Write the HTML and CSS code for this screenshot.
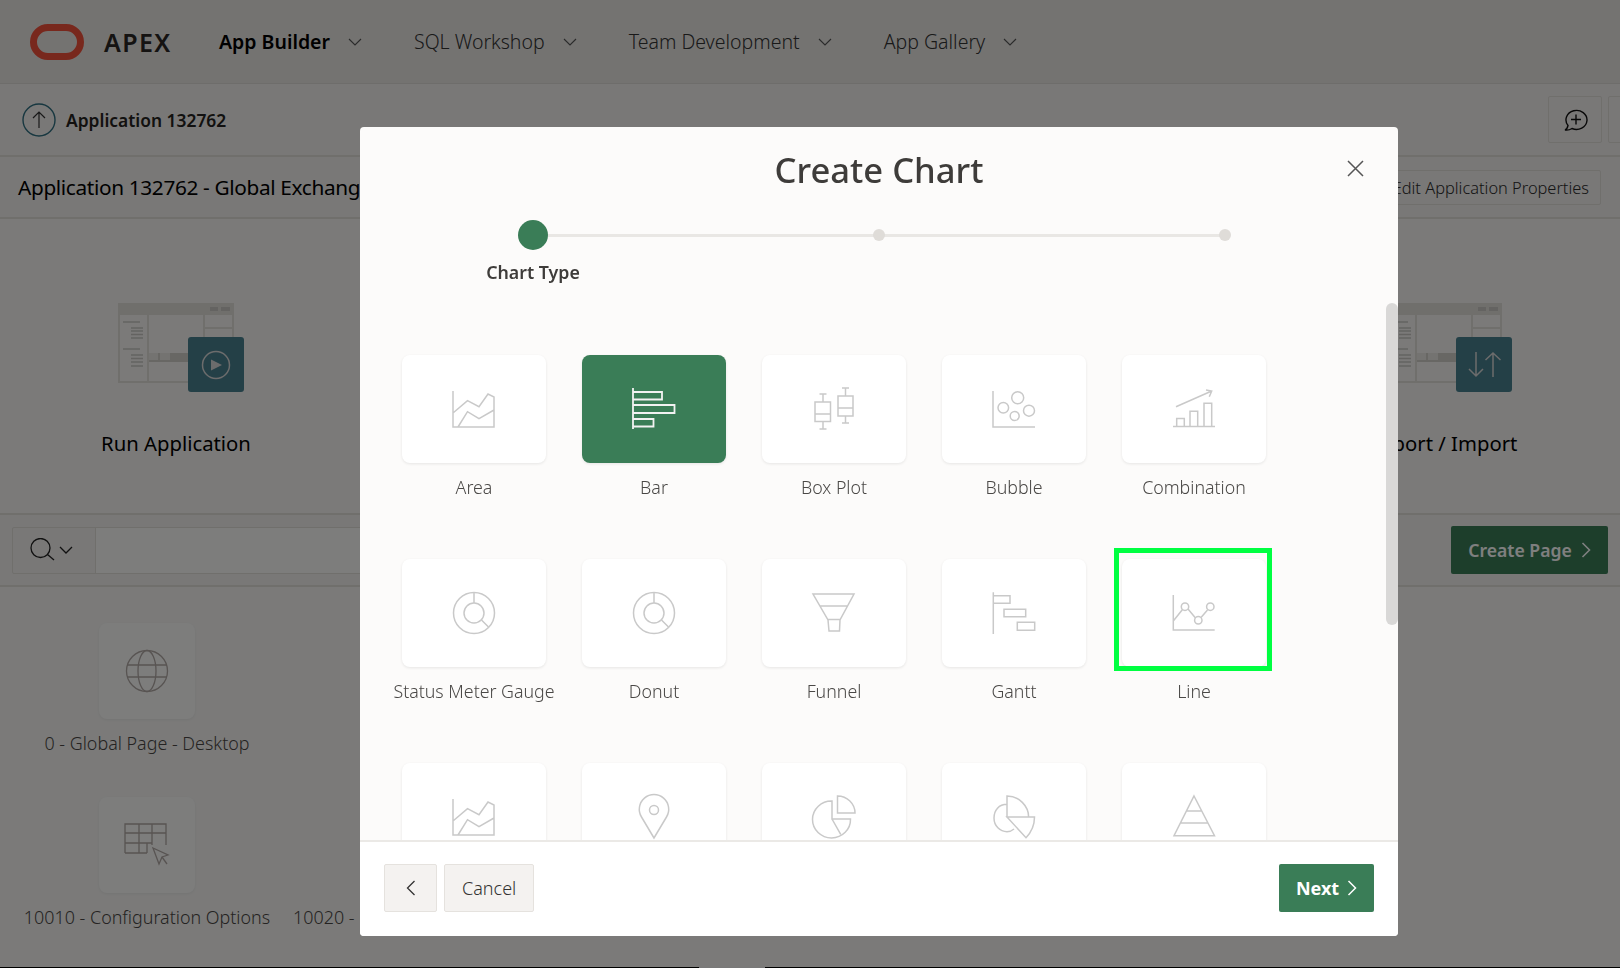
FILE: index.html
```html
<!DOCTYPE html>
<html lang="en">
<head>
<meta charset="UTF-8">
<title>Create Chart</title>
<link rel="stylesheet" href="styles.css">
</head>
<body>
<div class="page">
  <header class="topnav">
    <svg class="logo" width="54" height="36" viewBox="0 0 54 36"><rect x="3.5" y="3.5" width="47" height="29" rx="14.5" fill="none" stroke="#f0503a" stroke-width="7"/></svg>
    <span class="brand">APEX</span>
    <a class="nav-item nav-active">App Builder<svg class="chev" width="14" height="8" viewBox="0 0 14 8"><path d="M1 1l6 6 6-6"/></svg></a>
    <a class="nav-item">SQL Workshop<svg class="chev" width="14" height="8" viewBox="0 0 14 8"><path d="M1 1l6 6 6-6"/></svg></a>
    <a class="nav-item">Team Development<svg class="chev" width="14" height="8" viewBox="0 0 14 8"><path d="M1 1l6 6 6-6"/></svg></a>
    <a class="nav-item">App Gallery<svg class="chev" width="14" height="8" viewBox="0 0 14 8"><path d="M1 1l6 6 6-6"/></svg></a>
  </header>

  <div class="crumbs">
    <svg class="up-icon" width="34" height="34" viewBox="0 0 34 34"><circle cx="17" cy="17" r="16" fill="none" stroke="#2f6f80" stroke-width="1.4"/><path d="M17 25V9M11 15l6-6 6 6" fill="none" stroke="#333" stroke-width="1.2"/></svg>
    <b class="crumb-name">Application 132762</b>
    <span class="tool-btn"><svg width="26" height="26" viewBox="0 0 26 26"><path d="M3 23c1.500-.5 2.500-2 3-4.500A10.500 9.500 0 1 1 10 21.500C8 22.800 5 23.300 3 23zM14 7.500v10M9 12.500h10" fill="none" stroke="#111" stroke-width="1.400"/></svg></span>
    <span class="tool-btn tool-btn-cut"></span>
  </div>

  <div class="title-row">
    <h1>Application 132762 - Global Exchange Rates</h1>
    <span class="edit-btn">Edit Application Properties</span>
  </div>

  <section class="hero">
    <div class="hero-item">
      <div class="thumb">
        <svg width="116" height="80" viewBox="0 0 116 80"><use href="#thumbnail"/></svg>
        <span class="thumb-tile"><svg width="32" height="32" viewBox="0 0 32 32"><circle cx="16" cy="16" r="13.500" fill="none" stroke="#d8d8d8" stroke-width="1.5"/><path d="M11 10.500l11 5.500-11 5.500z" fill="#d8d8d8"/></svg></span>
      </div>
      <span class="hero-label">Run Application</span>
    </div>
    <div class="hero-item">
      <div class="thumb">
        <svg width="116" height="80" viewBox="0 0 116 80"><use href="#thumbnail"/></svg>
        <span class="thumb-tile"><svg width="34" height="30" viewBox="0 0 34 30"><path d="M9 2v24M2 19l7 7 7-7M26 27V3M18.500 10L26 3l7.500 7" fill="none" stroke="#d8d8d8" stroke-width="1.5"/></svg></span>
      </div>
      <span class="hero-label">Export / Import</span>
    </div>
  </section>

  <div class="search-row">
    <div class="search-group">
      <span class="search-btn">
        <svg width="26" height="24" viewBox="0 0 26 24"><circle cx="10.500" cy="10" r="9.500" fill="none" stroke="#222" stroke-width="1.300"/><path d="M17.500 16.500l6.500 5.500" stroke="#222" stroke-width="1.300"/></svg>
        <svg class="chev-dark" width="14" height="8" viewBox="0 0 14 8"><path d="M1 1l6 6 6-6"/></svg>
      </span>
      <span class="search-input"></span>
    </div>
    <a class="create-btn">Create Page<svg width="10" height="16" viewBox="0 0 10 16"><path d="M1.500 1l7 7-7 7" fill="none" stroke="#fff" stroke-width="1.6"/></svg></a>
  </div>

  <div class="pages">
    <div class="page-tile">
      <span class="page-icon"><svg width="44" height="44" viewBox="0 0 44 44"><g fill="none" stroke="#b0a8a4" stroke-width="1.300"><ellipse cx="22" cy="22" rx="20.500" ry="20.500"/><ellipse cx="22" cy="22" rx="9" ry="20.500"/><path d="M2 16h40M2 28h40"/></g></svg></span>
      <span class="page-label">0 - Global Page - Desktop</span>
    </div>
    <div class="page-tile"></div>
    <div class="page-tile">
      <span class="page-icon"><svg width="46" height="46" viewBox="0 0 46 46"><g fill="none" stroke="#b0a8a4" stroke-width="1.300"><path d="M1 31V2h41v21M1 11h41M1 21h27M1 31h22M15 2v29M28 2v21M23 21v10"/><path d="M29 26l15 7-6 2-3 7z"/><path d="M38 35l5 7"/></g></svg></span>
      <span class="page-label">10010 - Configuration Options</span>
    </div>
    <div class="page-tile">
      <span class="page-icon"></span>
      <span class="page-label">10020 - Exchange Rate History</span>
    </div>
  </div>

  <div class="page-edge"><span></span></div>
</div>

<div class="overlay"></div>

<div class="dialog">
  <h2 class="dialog-title">Create Chart</h2>
  <svg class="dialog-close" width="17" height="17" viewBox="0 0 17 17"><path d="M1 1l15 15M16 1L1 16" stroke="#555" stroke-width="1.500"/></svg>

  <ol class="steps">
    <li class="step step-current"><span class="step-dot"></span><span class="step-label">Chart Type</span></li>
    <li class="step"><span class="step-dot"></span></li>
    <li class="step"><span class="step-dot"></span></li>
  </ol>

  <div class="dialog-body">
    <span class="scrollbar"></span>
    <div class="chart-grid">
      <div class="chart-item">
        <span class="chart-card"><svg class="ico" width="48" height="48" viewBox="0 0 48 48"><use href="#i-area"/></svg></span>
        <span class="chart-label">Area</span>
      </div>
      <div class="chart-item">
        <span class="chart-card card-selected"><svg class="ico" width="48" height="48" viewBox="0 0 48 48"><path d="M3 3v41M3 7h29v7.500H3M3 20h41.500v8H3M3 34h20.500v7.500H3"/></svg></span>
        <span class="chart-label">Bar</span>
      </div>
      <div class="chart-item">
        <span class="chart-card"><svg class="ico" width="48" height="48" viewBox="0 0 48 48"><path d="M5 17h15.500v19.500H5zM5 29h15.500M13 17V9M9.500 9h7M13 36.500V44M9.500 44h7M28 11h15v20H28zM28 23h15M35.500 11V3M32 3h7M35.500 31v7M32 38h7"/></svg></span>
        <span class="chart-label">Box Plot</span>
      </div>
      <div class="chart-item">
        <span class="chart-card"><svg class="ico" width="48" height="48" viewBox="0 0 48 48"><path d="M3 6v36h42"/><circle cx="13.300" cy="22.700" r="5.300"/><circle cx="27.700" cy="12.700" r="6"/><circle cx="24.700" cy="31" r="4.500"/><circle cx="39" cy="25.700" r="5.500"/></svg></span>
        <span class="chart-label">Bubble</span>
      </div>
      <div class="chart-item">
        <span class="chart-card"><svg class="ico" width="48" height="48" viewBox="0 0 48 48"><path d="M3 41.500h42M6.700 41.500v-8h7.600v8M20 41.500V26.300h7.700v15.200M34 41.500V18.300h7.700v23.200M6 21.700L41.700 6M36 5l5.700 1-2.400 5.700"/></svg></span>
        <span class="chart-label">Combination</span>
      </div>
      <div class="chart-item">
        <span class="chart-card"><svg class="ico" width="48" height="48" viewBox="0 0 48 48"><use href="#i-donut"/></svg></span>
        <span class="chart-label">Status Meter Gauge</span>
      </div>
      <div class="chart-item">
        <span class="chart-card"><svg class="ico" width="48" height="48" viewBox="0 0 48 48"><use href="#i-donut"/></svg></span>
        <span class="chart-label">Donut</span>
      </div>
      <div class="chart-item">
        <span class="chart-card"><svg class="ico" width="48" height="48" viewBox="0 0 48 48"><path d="M3 5h41L30 31l-.5 11H19l-1-11zM10 17h27.500M18 30.500h12"/></svg></span>
        <span class="chart-label">Funnel</span>
      </div>
      <div class="chart-item">
        <span class="chart-card"><svg class="ico" width="48" height="48" viewBox="0 0 48 48"><path d="M3.300 3.300V45M3.300 6.700H20v7.600H3.300M14 20.300h21.700v7.400H14zM27.300 33.300h17.400v8H27.300z"/></svg></span>
        <span class="chart-label">Gantt</span>
      </div>
      <div class="chart-item">
        <span class="chart-card card-marked"><svg class="ico" width="48" height="48" viewBox="0 0 48 48"><path d="M3.300 6v35h41.400M3.300 32l9.200-11.500M18 20l7.500 9M31 28.500l6.500-7.500"/><circle cx="15" cy="17.700" r="3.700"/><circle cx="28.300" cy="31.300" r="3.700"/><circle cx="40.300" cy="17.700" r="3.700"/></svg></span>
        <span class="chart-label">Line</span>
      </div>
      <div class="chart-item">
        <span class="chart-card"><svg class="ico" width="48" height="48" viewBox="0 0 48 48"><use href="#i-area"/></svg></span>
      </div>
      <div class="chart-item">
        <span class="chart-card"><svg class="ico" width="48" height="48" viewBox="0 0 48 48"><path d="M24 45L11.500 24a14.700 14.700 0 1 1 25 0z"/><circle cx="24" cy="17" r="4.500"/></svg></span>
      </div>
      <div class="chart-item">
        <span class="chart-card"><svg class="ico" width="48" height="48" viewBox="0 0 48 48"><path d="M27.500 3A17.500 17 0 0 1 45 20H27.500zM22 8a19 18.500 0 1 0 18.500 18H22zM22 26l8.700 15.300"/></svg></span>
      </div>
      <div class="chart-item">
        <span class="chart-card"><svg class="ico" width="48" height="48" viewBox="0 0 48 48"><path d="M17 3c12 0 21.600 10 21.600 21H17zM17 11.300C9 11.300 4 17 4 25c0 8 6 13.700 13 13.700 3 0 5-1 7-2.700M17 24h27.500c0 7-3 15-8.500 20.700z"/></svg></span>
      </div>
      <div class="chart-item">
        <span class="chart-card"><svg class="ico" width="48" height="48" viewBox="0 0 48 48"><path d="M24 3l20.500 39.700H4zM16 18h16M10.500 30h27"/></svg></span>
      </div>
    </div>
  </div>

  <footer class="dialog-foot">
    <a class="foot-btn foot-back"><svg width="10" height="16" viewBox="0 0 10 16"><path d="M8.500 1l-7 7 7 7" fill="none" stroke="#333" stroke-width="1.300"/></svg></a>
    <a class="foot-btn">Cancel</a>
    <a class="next-btn">Next<svg width="10" height="16" viewBox="0 0 10 16"><path d="M1.500 1l7 7-7 7" fill="none" stroke="#fff" stroke-width="1.500"/></svg></a>
  </footer>
</div>

<svg class="defs" width="0" height="0">
  <defs>
    <g id="i-area"><path d="M3 6v36h41V12l-6-3-9 12.700-11.500-6L3 28M8 42l9.500-15.300L29 33.700 44 25"/></g>
    <g id="i-donut"><circle cx="24" cy="24" r="20.500"/><circle cx="24" cy="24" r="10"/><path d="M24 3.500V14M31.500 31l7 7"/></g>
    <g id="thumbnail">
      <rect x="1" y="1" width="114" height="78" fill="none" stroke="#e0ded9" stroke-width="2"/>
      <rect x="0" y="0" width="116" height="12" fill="#e0ded9"/>
      <rect x="92" y="4" width="8" height="4" fill="#c8c6c2"/>
      <rect x="103" y="4" width="9" height="4" fill="#c8c6c2"/>
      <path d="M30 12v67M86 12v38M86 25h30M86 37h30" stroke="#e0ded9" stroke-width="2"/>
      <rect x="31" y="50" width="85" height="9" fill="#d0cec9"/>
      <rect x="31" y="50" width="9" height="7" fill="#e8e6e2"/>
      <rect x="42" y="50" width="10" height="7" fill="#e8e6e2"/>
      <path d="M5 19h17M13 25h12M13 28h12M13 31.500h12M13 35h12M5 46h17M13 52h12M13 55.500h12M13 59h12M13 63h12" stroke="#c8c6c2" stroke-width="1.500"/>
    </g>
  </defs>
</svg>
</body>
</html>
```

FILE: styles.css
```css
* {
  box-sizing: border-box;
}

html, body {
  margin: 0;
  padding: 0;
  height: 100%;
  overflow: hidden;
}

body {
  font-family: "Noto Sans", "Open Sans", Arial, sans-serif;
  color: #000;
  background-color: #f4f2f0;
}

.page {
  height: 968px;
  display: flex;
  flex-direction: column;
  overflow: hidden;
}

/* top bar */
.topnav {
  height: 84px;
  flex: none;
  display: flex;
  align-items: center;
  padding: 0 0 0 30px;
  background-color: #e8e6e3;
  border-bottom: 1px solid #dcdad6;
}

.brand {
  margin-left: 20px;
  width: 115px;
  font-size: 25px;
  font-weight: 600;
  letter-spacing: 1.4px;
  color: #2a2725;
}

.nav-item {
  display: flex;
  align-items: center;
  gap: 18px;
  margin-right: 52px;
  font-size: 19.500px;
  font-weight: 300;
  color: #333;
}

.nav-active {
  font-weight: 600;
  color: #000;
}

.chev path, .chev-dark path {
  fill: none;
  stroke: #555;
  stroke-width: 1.100;
}

.chev-dark path {
  stroke: #222;
  stroke-width: 1.300;
}

.crumbs {
  height: 73px;
  flex: none;
  display: flex;
  align-items: center;
  padding-left: 22px;
  background-color: #f2f0ee;
  border-bottom: 2px solid #e0ded9;
}

.crumb-name {
  margin-left: 10px;
  margin-right: auto;
  font-size: 17.400px;
  font-weight: 600;
  color: #252320;
}

.tool-btn {
  width: 54px;
  height: 47px;
  margin-right: 6px;
  display: flex;
  align-items: center;
  justify-content: center;
  border: 1px solid #e0ded9;
  border-radius: 2px;
}

.tool-btn-cut {
  margin-right: -42px;
}

.title-row {
  height: 62px;
  flex: none;
  display: flex;
  align-items: center;
  justify-content: space-between;
  padding: 0 19px 0 18px;
  background-color: #f2f0ee;
  border-bottom: 2px solid #e0ded9;
}

h1 {
  margin: 0;
  font-size: 20.800px;
  font-weight: 400;
  letter-spacing: -0.35px;
  white-space: nowrap;
}

.edit-btn {
  height: 35px;
  padding: 0 11px;
  display: flex;
  align-items: center;
  font-size: 16.400px;
  font-weight: 300;
  color: #2a2a2a;
  border: 1px solid #e0ded9;
  border-radius: 2px;
}

/* hero tiles */
.hero {
  height: 294px;
  flex: none;
  display: flex;
  justify-content: space-between;
  padding: 84px 76px 0;
  background-color: #f6f5f3;
}

.hero-item {
  width: 200px;
  display: flex;
  flex-direction: column;
  align-items: center;
}

.thumb {
  position: relative;
  width: 116px;
  height: 80px;
}

.thumb-tile {
  position: absolute;
  left: 70px;
  top: 34px;
  width: 56px;
  height: 55px;
  display: flex;
  align-items: center;
  justify-content: center;
  background-color: #48808f;
  border-radius: 3px;
}

.hero-label {
  margin-top: 45px;
  font-size: 20.300px;
  line-height: 30px;
  white-space: nowrap;
}

.search-row {
  height: 74px;
  flex: none;
  display: flex;
  align-items: center;
  padding: 0 12px;
  gap: 60px;
  background-color: #f2f0ee;
  border-top: 2px solid #e0ded9;
  border-bottom: 2px solid #e0ded9;
}

.search-group {
  flex: 1;
  height: 47px;
  display: flex;
  border: 1px solid #e0ded9;
  border-radius: 2px;
}

.search-btn {
  width: 82px;
  display: flex;
  align-items: center;
  gap: 3px;
  padding-left: 17px;
}

.search-input {
  flex: 1;
  background-color: #fbfaf9;
  border-left: 1px solid #e0ded9;
}

.create-btn {
  width: 157px;
  height: 48px;
  display: flex;
  align-items: center;
  justify-content: center;
  gap: 9px;
  font-size: 17.600px;
  font-weight: 600;
  color: #fff;
  background-color: #3a7d57;
  border-radius: 2px;
}

.pages {
  flex: 1;
  min-height: 0;
  overflow: hidden;
  display: grid;
  grid-template-columns: 270px 270px;
  grid-auto-rows: 174px;
  padding: 36px 0 0 12px;
  background-color: #f6f5f3;
}

.page-tile {
  display: flex;
  flex-direction: column;
  align-items: center;
}

.page-icon {
  width: 96px;
  height: 96px;
  flex: none;
  display: flex;
  align-items: center;
  justify-content: center;
  background-color: #fafaf9;
  border-radius: 8px;
  box-shadow: 0 1px 3px rgba(0, 0, 0, 0.06);
}

.page-label {
  margin-top: 12px;
  font-size: 17.900px;
  line-height: 24px;
  font-weight: 300;
  color: #4a4744;
  white-space: nowrap;
}

.page-edge {
  height: 1px;
  flex: none;
  background-color: #000;
}

.page-edge span {
  display: block;
  width: 66px;
  height: 1px;
  margin-left: 699px;
  background-color: #f0f0f0;
}

.overlay {
  position: fixed;
  top: 0;
  left: 0;
  right: 0;
  bottom: 0;
  background-color: rgba(0, 0, 0, 0.5);
}

/* dialog */
.dialog {
  position: fixed;
  left: 360px;
  top: 127px;
  width: 1038px;
  height: 809px;
  display: flex;
  flex-direction: column;
  background-color: #fcfbfa;
  border-radius: 4px;
  overflow: hidden;
}

.dialog-title {
  margin: 18px 0 0;
  font-size: 34.600px;
  line-height: 50px;
  font-weight: 500;
  text-align: center;
  color: #3e3c3a;
}

.dialog-close {
  position: absolute;
  top: 33px;
  right: 34px;
}

.steps {
  list-style: none;
  margin: 25px 0 0;
  padding: 0;
  height: 70px;
  flex: none;
  display: grid;
  grid-template-columns: repeat(3, 346px);
}

.step {
  position: relative;
  display: flex;
  flex-direction: column;
  align-items: center;
}

.step::before {
  content: "";
  position: absolute;
  left: 50%;
  top: 14px;
  width: 346px;
  height: 3px;
  background-color: #e9e7e4;
}

.step:last-child::before {
  display: none;
}

.step-dot {
  position: relative;
  width: 12px;
  height: 12px;
  margin-top: 9px;
  background-color: #dfdcd8;
  border-radius: 50%;
}

.step-current .step-dot {
  width: 30px;
  height: 30px;
  margin-top: 0;
  background-color: #3a7d57;
}

.step-label {
  margin-top: 11px;
  font-size: 17.800px;
  line-height: 22px;
  font-weight: 600;
  color: #3e3c3a;
}

.dialog-body {
  position: relative;
  flex: 1;
  overflow: hidden;
}

.scrollbar {
  position: absolute;
  top: 13px;
  right: 0;
  width: 12px;
  height: 322px;
  background-color: #d9d8d7;
  border-radius: 6px;
}

.chart-grid {
  display: grid;
  grid-template-columns: repeat(5, 144px);
  column-gap: 36px;
  row-gap: 59px;
  padding: 65px 0 0 42px;
}

.chart-item {
  min-height: 145px;
  display: flex;
  flex-direction: column;
  align-items: center;
}

.chart-card {
  position: relative;
  width: 144px;
  height: 108px;
  flex: none;
  display: flex;
  align-items: center;
  justify-content: center;
  background-color: #fff;
  border-radius: 8px;
  box-shadow: 0 1px 3px rgba(0, 0, 0, 0.09);
}

.card-selected {
  background-color: #3a7d57;
}

.card-marked::after {
  content: "";
  position: absolute;
  top: -11px;
  left: -8px;
  right: -6px;
  bottom: -4px;
  border: 5px solid #00ff41;
}

.ico {
  fill: none;
  stroke: #c9c9c9;
  stroke-width: 1.500;
}

.card-selected .ico {
  stroke: #f2f2f2;
  stroke-width: 1.800;
}

.chart-label {
  margin-top: 12px;
  font-size: 17.800px;
  line-height: 24px;
  font-weight: 300;
  color: #4a4846;
  white-space: nowrap;
}

.dialog-foot {
  height: 96px;
  flex: none;
  display: flex;
  align-items: center;
  gap: 7px;
  padding: 0 24px 2px;
  background-color: #fff;
  border-top: 2px solid #ebe9e6;
}

.foot-btn {
  height: 48px;
  padding: 0 17px;
  display: flex;
  align-items: center;
  font-size: 18px;
  font-weight: 300;
  color: #333;
  background-color: #f4f2f0;
  border: 1px solid #e5e2de;
  border-radius: 2px;
}

.foot-back {
  width: 53px;
  justify-content: center;
  padding: 0;
}

.next-btn {
  height: 48px;
  width: 95px;
  margin-left: auto;
  display: flex;
  align-items: center;
  justify-content: center;
  gap: 8px;
  font-size: 18px;
  font-weight: 700;
  color: #fff;
  background-color: #3a7d57;
  border-radius: 2px;
}

.defs {
  position: absolute;
}
```
